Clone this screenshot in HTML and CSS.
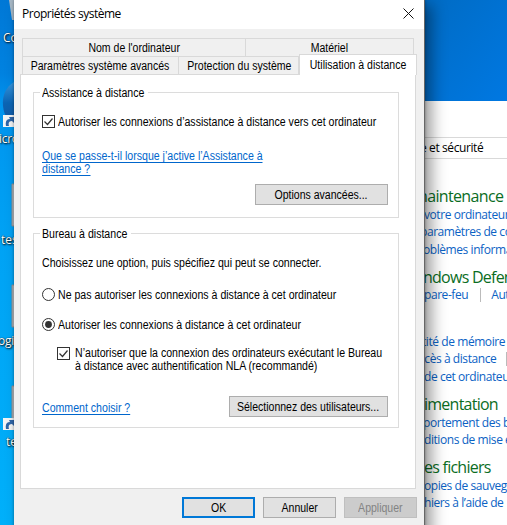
FILE: index.html
```html
<!DOCTYPE html>
<html lang="fr">
<head>
<meta charset="utf-8">
<title>Propriétés système</title>
<link rel="stylesheet" href="styles.css">
</head>
<body>
<div class="desktop">
  <svg class="wallpaper" width="507" height="525" viewBox="0 0 507 525">
    <defs>
      <linearGradient id="top" x1="0" y1="0" x2="1" y2="1"><stop offset="0" stop-color="#006bc3"/><stop offset="1" stop-color="#0078e2"/></linearGradient>
      <linearGradient id="side" x1="0" y1="0" x2="0" y2="1"><stop offset="0" stop-color="#0078d6"/><stop offset=".14" stop-color="#0082e0"/><stop offset=".2" stop-color="#0094ee"/><stop offset=".45" stop-color="#00a2f4"/><stop offset="1" stop-color="#00b0fa"/></linearGradient>
      <linearGradient id="edge" x1="0" y1="0" x2="0" y2="1"><stop offset="0" stop-color="#3695dc"/><stop offset=".5" stop-color="#0b65b5"/><stop offset="1" stop-color="#1557a2"/></linearGradient>
    </defs>
    <rect width="20" height="525" fill="url(#side)"/>
    <rect x="420" width="87" height="101" fill="url(#top)"/>
    <path d="M9 0h5v20h-2z" fill="#a7b8c6"/>
    <path d="M14 82C6 87 2 95 3 106c1 10 5 15 11 18z" fill="url(#edge)"/>
    <path d="M14 184h-2v42h2M14 285h-2v42h2M14 386h-2v34h2" fill="#b8bcc1" stroke="#8d8f93"/>
    <path d="M3 115h11v12H3zM3 418h11v12H3z" fill="#f2f4f5"/>
    <path d="M6 126c-1-5 1-7 4-7l-1-2h5v6l-2-2c-3 0-4 2-3 5zM6 429c-1-5 1-7 4-7l-1-2h5v6l-2-2c-3 0-4 2-3 5z" fill="#2d65a8"/>
  </svg>
  <span class="icon-label l1">Co</span>
  <span class="icon-label l2">icro</span>
  <span class="icon-label l3">tes</span>
  <span class="icon-label l4">ogi</span>
  <span class="icon-label l5">te</span>

  <section class="panel-window">
    <div class="crumb"><span>e et sécurité</span></div>
    <div class="panel-content">
      <h2 class="h-a">maintenance</h2>
      <p class="p-a1">votre ordinateur</p>
      <p class="p-a2">paramètres de co</p>
      <p class="p-a3">oblèmes informa</p>
      <h2 class="h-b">ndows Defen</h2>
      <p class="p-b"><span>pare-feu</span><i></i><span>Aut</span></p>
      <p class="p-c1">tité de mémoire</p>
      <p class="p-c2"><span>ccès à distance</span><i></i></p>
      <p class="p-c3">de cet ordinateu</p>
      <h2 class="h-d">imentation</h2>
      <p class="p-d1">portement des b</p>
      <p class="p-d2">ditions de mise e</p>
      <h2 class="h-e">es fichiers</h2>
      <p class="p-e1">opies de sauveg</p>
      <p class="p-e2">hiers à l’aide de</p>
    </div>
  </section>

  <section class="dialog">
    <header class="titlebar"><b>Propriétés système</b>
      <svg width="11" height="11" viewBox="0 0 11 11"><path d="M.5.5l10 10M10.5.5l-10 10" stroke="#111" fill="none"/></svg>
    </header>
    <div class="tabs tabs-back"><div class="tab w223"><span class="mid">Nom de l'ordinateur</span></div><div class="tab w169"><span class="mid">Matériel</span></div></div>
    <div class="tabs tabs-front"><div class="tab w156"><span class="mid">Paramètres système avancés</span></div><div class="tab w121"><span class="mid">Protection du système</span></div><div class="tab active"><span class="mid">Utilisation à distance</span></div></div>
    <main class="page">
      <section class="group assist">
        <h3><span>Assistance à distance</span></h3>
        <div class="option"><svg class="mark" width="13" height="13"><rect x=".5" y=".5" width="12" height="12" fill="#fff" stroke="#333"/><path d="M2.5 6.5l3 3 5-6" fill="none" stroke="#333" stroke-width="1.2"/></svg><span>Autoriser les connexions d’assistance à distance vers cet ordinateur</span></div>
        <a class="link help"><span>Que se passe-t-il lorsque j’active l’Assistance à</span><br><span>distance ?</span></a>
        <button class="w133"><span class="mid">Options avancées...</span></button>
      </section>
      <section class="group remote">
        <h3><span>Bureau à distance</span></h3>
        <p class="intro"><span>Choisissez une option, puis spécifiez qui peut se connecter.</span></p>
        <div class="option r1"><svg class="mark" width="13" height="13"><circle cx="6.5" cy="6.5" r="6" fill="#fff" stroke="#333"/></svg><span>Ne pas autoriser les connexions à distance à cet ordinateur</span></div>
        <div class="option r2"><svg class="mark" width="13" height="13"><circle cx="6.5" cy="6.5" r="6" fill="#fff" stroke="#333"/><circle cx="6.5" cy="6.5" r="3.4" fill="#333"/></svg><span>Autoriser les connexions à distance à cet ordinateur</span></div>
        <div class="option nla"><svg class="mark" width="13" height="13"><rect x=".5" y=".5" width="12" height="12" fill="#fff" stroke="#333"/><path d="M2.5 6.5l3 3 5-6" fill="none" stroke="#333" stroke-width="1.2"/></svg><div><span>N’autoriser que la connexion des ordinateurs exécutant le Bureau</span><br><span>à distance avec authentification NLA (recommandé)</span></div></div>
        <div class="users"><a class="link"><span>Comment choisir ?</span></a><button class="w159"><span class="mid">Sélectionnez des utilisateurs...</span></button></div>
      </section>
    </main>
    <footer class="actions"><button class="primary"><span class="mid">OK</span></button><button><span class="mid">Annuler</span></button><button class="disabled"><span class="mid">Appliquer</span></button></footer>
  </section>
</div>
</body>
</html>
```
FILE: styles.css
```css
* { box-sizing: border-box; }
body { margin: 0; font: 12px/13px "Liberation Sans", sans-serif; color: #000; }
h2, h3, p { margin: 0; font-weight: normal; white-space: nowrap; }
.desktop { position: relative; width: 507px; height: 525px; overflow: hidden; background: #00a4f5; }
.wallpaper { position: absolute; left: 0; top: 0; }
.icon-label { position: absolute; font: 12px/14px "Open Sans", sans-serif; color: #fff; text-shadow: 1px 1px 2px #000, 0 0 1px #000; }
.l1 { left: 3px; top: 31px; }
.l2 { left: -1px; top: 132px; letter-spacing: -.3px; }
.l3 { left: 1px; top: 233px; }
.l4 { left: -2px; top: 334px; letter-spacing: -.3px; }
.l5 { left: 6px; top: 435px; }

.panel-window { position: absolute; left: 424px; top: 101px; width: 83px; height: 424px; overflow: hidden; background: #fff; padding-top: 36px; font-family: "Open Sans", sans-serif; }
.crumb { height: 22px; border: solid #d9d9d9; border-width: 1px 0; font-size: 12px; line-height: 20px; white-space: nowrap; }
.crumb span { margin-left: -4px; letter-spacing: -.4px; }
.panel-content { display: flex; flex-direction: column; padding-top: 27px; }
.panel-content h2 { height: 20px; line-height: 20px; font-size: 16px; color: #0b6d1f; letter-spacing: -.75px; }
.panel-content p { height: 17px; line-height: 17px; font-size: 12px; color: #0b62c4; display: flex; align-items: center; letter-spacing: -.43px; }
.panel-content i { flex: none; width: 1px; height: 14px; background: #bbb; margin: 0 10px 0 12px; }
.panel-content .h-a { margin-left: -11px; letter-spacing: -.65px; }
.p-a2 { margin-left: -4px; }
.p-a3 { margin-top: 1px; margin-left: -1px; }
.h-b { margin-top: 9px; margin-left: -1px; }
.p-b { margin-top: -1px; }
.p-c1 { margin-top: 30px; margin-left: -2px; }
.p-c2 { margin-left: -5px; }
.p-c2 i { margin-left: 10px; }
.p-c3 { margin-top: 1px; }
.h-d { margin-top: 9px; }
.p-d1 { margin-left: -1px; }
.h-e { margin-top: 9px; }

.dialog { position: absolute; left: 14px; top: -1px; width: 411px; height: 540px; border: 1px solid #666; border-left: 0; background: #f0f0f0; box-shadow: 7px 6px 14px rgba(0,0,0,.38), 0 0 3px rgba(0,0,0,.35); }
.titlebar { height: 29px; padding: 0 10px 1px 8px; background: #fff; display: flex; justify-content: space-between; align-items: center; font: 12px/18px "Open Sans", sans-serif; }
.titlebar svg { margin-bottom: 1px; }
.titlebar b { font-weight: normal; letter-spacing: -.48px; }
/* condensed dialog lettering */
.dialog span { display: inline-block; vertical-align: top; white-space: nowrap; transform: scaleX(.882); transform-origin: 0 50%; }
.dialog .mid { flex: none; transform: scaleX(.877); transform-origin: 50% 50%; }
.tabs { display: flex; margin-left: 8px; }
.tabs-back { margin-top: 9px; height: 18px; }
.tabs-front { height: 18px; }
.tab { flex: none; border: 1px solid #d9d9d9; border-width: 1px 1px 0 0; display: flex; justify-content: center; align-items: center; padding-top: 2px; }
.tab:first-child { border-left-width: 1px; }
.w223 { width: 224px; }
.w169 { width: 168px; }
.w156 { width: 157px; }
.w121 { width: 120px; }
.w121 .mid { margin-left: 2px; }
.tab.active { width: 118px; height: 21px; margin-top: -2px; border-left-width: 1px; background: #fff; z-index: 1; padding-top: 0; }
.page { margin-left: 6px; width: 396px; height: 415px; background: #fff; border: 1px solid #d9d9d9; padding: 17px 0 0 12px; }
.group { width: 366px; border: 1px solid #dcdcdc; padding: 0 10px 0 8px; }
.assist { height: 126px; }
.remote { height: 195px; margin-top: 15px; }
.group h3 { position: relative; font-size: 12px; height: 13px; margin: -6px 0 0 -2px; padding: 0 4px 0 2px; width: fit-content; background: #fff; }
.assist h3 { width: 108px; }
.remote h3 { width: 91px; }
.option { display: flex; align-items: center; gap: 3px; height: 13px; }
.option > span { margin-top: 1px; }
.mark { flex: none; }
.assist .option { margin-top: 15px; }
.link { color: #0066cc; text-decoration: none; }
.link span { height: 13px; border-bottom: 1px solid #0066cc; line-height: 12px; }
.help { display: block; margin-top: 22px; height: 26px; }
button { font: 12px/13px "Liberation Sans", sans-serif; color: #000; height: 21px; background: #e1e1e1; border: 1px solid #adadad; padding: 1px 0 0; display: flex; justify-content: center; align-items: center; }
.w133 { width: 133px; margin: 8px 0 0 auto; }
.w159 { width: 159px; }
.intro { margin-top: 16px; }
.r1 { margin-top: 18px; }
.r2 { margin-top: 17px; }
.nla { margin: 16px 0 0 15px; height: 26px; align-items: flex-start; gap: 5px; }
.users { display: flex; justify-content: space-between; align-items: center; margin-top: 23px; }
.users .link { margin-top: 3px; }
.actions { display: flex; gap: 8px; justify-content: flex-end; margin-top: 8px; padding-right: 7px; }
.actions button { width: 73px; }
.actions .primary { border: 2px solid #0078d7; }
.actions .disabled { background: #ccc; border-color: #bfbfbf; color: #838383; }
```
